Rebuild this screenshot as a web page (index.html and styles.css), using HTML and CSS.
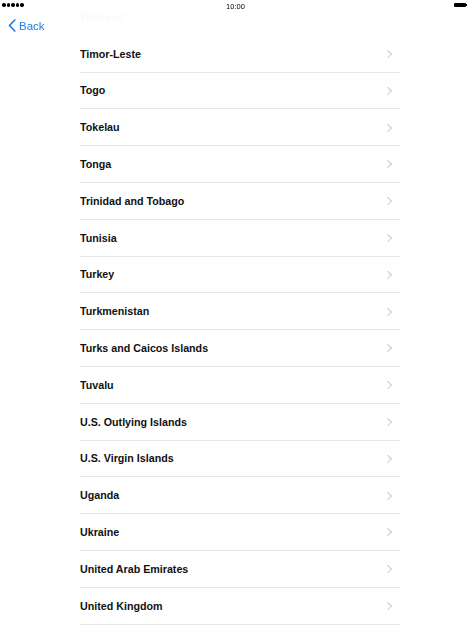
FILE: index.html
```html
<!DOCTYPE html>
<html>
<head>
<meta charset="utf-8">
<link rel="stylesheet" href="styles.css">
</head>
<body>
<header class="top">
  <div class="status">
    <div class="signal"><span></span><span></span><span></span><span></span><span></span></div>
    <div class="time">10:00</div>
    <div class="battery"><span class="cell"></span><span class="nub"></span></div>
  </div>
  <div class="nav">
    <a class="back">
      <svg width="8" height="13" viewBox="0 0 8 13"><path d="M6.8 1 L1.5 6.5 L6.8 12" fill="none" stroke="#1a7ee6" stroke-width="1.7" stroke-linecap="round" stroke-linejoin="round"/></svg>
      <span>Back</span>
    </a>
  </div>
</header>
<ul class="list">
  <li class="row"><span>Thailand</span><i class="chev"></i></li>
  <li class="row"><span>Timor-Leste</span><i class="chev"></i></li>
  <li class="row"><span>Togo</span><i class="chev"></i></li>
  <li class="row"><span>Tokelau</span><i class="chev"></i></li>
  <li class="row"><span>Tonga</span><i class="chev"></i></li>
  <li class="row"><span>Trinidad and Tobago</span><i class="chev"></i></li>
  <li class="row"><span>Tunisia</span><i class="chev"></i></li>
  <li class="row"><span>Turkey</span><i class="chev"></i></li>
  <li class="row"><span>Turkmenistan</span><i class="chev"></i></li>
  <li class="row"><span>Turks and Caicos Islands</span><i class="chev"></i></li>
  <li class="row"><span>Tuvalu</span><i class="chev"></i></li>
  <li class="row"><span>U.S. Outlying Islands</span><i class="chev"></i></li>
  <li class="row"><span>U.S. Virgin Islands</span><i class="chev"></i></li>
  <li class="row"><span>Uganda</span><i class="chev"></i></li>
  <li class="row"><span>Ukraine</span><i class="chev"></i></li>
  <li class="row"><span>United Arab Emirates</span><i class="chev"></i></li>
  <li class="row"><span>United Kingdom</span><i class="chev"></i></li>
</ul>
</body>
</html>
```
FILE: styles.css
```css
html, body {
  margin: 0;
  padding: 0;
  background: #fff;
  overflow: hidden;
  height: 628px;
}
body {
  font-family: "Liberation Sans", Arial, sans-serif;
  color: #000;
}
.top {
  position: fixed;
  top: 0;
  left: 0;
  right: 0;
  height: 36px;
  background: rgba(255, 255, 255, 0.975);
  z-index: 2;
}
.status {
  height: 12px;
  display: flex;
  align-items: center;
  justify-content: space-between;
  padding: 0 4px 0 2px;
  position: relative;
}
.signal {
  display: flex;
  gap: 1px;
  margin-top: -2px;
}
.signal span {
  width: 3.6px;
  height: 3.6px;
  border-radius: 50%;
  background: #000;
}
.time {
  position: absolute;
  left: 0;
  right: 0;
  top: 1px;
  text-align: center;
  font-size: 7.5px;
  line-height: 12px;
  color: #000;
}
.battery {
  display: flex;
  align-items: center;
  margin-top: -2px;
}
.battery .cell {
  width: 12px;
  height: 4.5px;
  background: #000;
  border-radius: 1px;
}
.battery .nub {
  width: 1px;
  height: 2px;
  background: #000;
}
.nav {
  height: 23px;
  display: flex;
  align-items: center;
  padding-left: 8px;
}
.back {
  display: flex;
  align-items: center;
  gap: 3px;
  color: #1a7ee6;
  font-size: 11.5px;
  margin-top: 4px;
}
.list {
  list-style: none;
  margin: -1px 0 0 80px;
  padding: 0;
  width: 320px;
}
.row {
  height: 36.8px;
  box-sizing: border-box;
  border-bottom: 1px solid #e6e6e6;
  display: flex;
  align-items: center;
  justify-content: space-between;
  padding-right: 9px;
  font-size: 10.7px;
  font-weight: bold;
  color: #111;
}
.chev {
  width: 4.5px;
  height: 4.5px;
  border-top: 1px solid #c8c8cc;
  border-right: 1px solid #c8c8cc;
  transform: rotate(45deg);
  margin-right: 1px;
}
```
